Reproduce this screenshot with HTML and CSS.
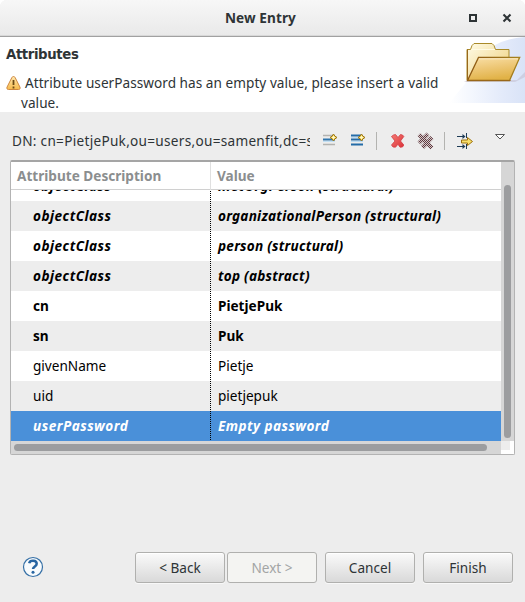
FILE: index.html
```html
<!DOCTYPE html>
<html lang="en">
<head>
<meta charset="utf-8">
<title>New Entry</title>
<link rel="stylesheet" href="styles.css">
</head>
<body>
<div class="dialog">
  <header class="titlebar">
    <h1>New Entry</h1>
    <svg class="winicons" width="48" height="16" viewBox="0 0 48 16"><path d="M5 5h6v6H5z" fill="none" stroke="#2e3436" stroke-width="2"/><path d="M38.500 4.500l7 7M45.500 4.500l-7 7" stroke="#2e3436" stroke-width="2.100"/></svg>
  </header>
  <section class="banner">
    <div class="message">
      <h2>Attributes</h2>
      <div class="warning">
        <svg width="15" height="16" viewBox="0 0 15 16"><defs><linearGradient id="w" x2="0" y2="1"><stop stop-color="#ffe9b0"/><stop offset="1" stop-color="#f6ba4b"/></linearGradient></defs><path d="M7.500 1.500c.8 0 1.300.4 1.700 1.200l4.700 9.300c.7 1.500 0 2.500-1.400 2.500h-10C1.100 14.500.4 13.500 1.100 12l4.700-9.300c.4-.8.9-1.200 1.700-1.200z" fill="url(#w)" stroke="#cd8740"/><path d="M7.500 5v5M7.500 11.500v2" stroke="#6d4b16" stroke-width="1.800"/></svg>
        <p>Attribute userPassword has an empty value, please insert a valid<br><span class="hang">value.</span></p>
      </div>
    </div>
    <svg class="folder" width="75" height="66" viewBox="0 0 75 66">
      <defs>
        <linearGradient id="bg"><stop stop-color="#fff"/><stop offset=".25" stop-color="#f5f8fe"/><stop offset=".7" stop-color="#e3eafa"/><stop offset="1" stop-color="#d9e3f7"/></linearGradient>
        <linearGradient id="back" x2="1" y2="1"><stop stop-color="#fffce8"/><stop offset="1" stop-color="#edcd75"/></linearGradient>
        <linearGradient id="front" x2=".3" y2="1"><stop stop-color="#fae1aa"/><stop offset=".5" stop-color="#eec878"/><stop offset="1" stop-color="#e1b247"/></linearGradient>
        <linearGradient id="edge" x2="1"><stop stop-color="#8d5713"/><stop offset="1" stop-color="#a7831f"/></linearGradient>
      </defs>
      <path d="M0 66V65L14 48 45 8Q58 1 75 0v66z" fill="url(#bg)"/>
      <path d="M17 43h50l8-8v5l-10 5H14z" fill="#bdb5c7" opacity=".45"/>
      <path d="M17 43V12.500h3.500l1.500-4 2-2h18l2 2 1.500 4H59V43z" fill="url(#back)" stroke="#a98a29"/>
      <path d="M21 12.500h24" stroke="#fffbe5"/>
      <path d="M17.500 43.500L28.500 20.500H69.700L59.500 43.500z" fill="url(#front)" stroke="url(#edge)" stroke-width="1.300"/>
      <path d="M28.900 21.800H68" stroke="#fff0cc"/>
      <path d="M17.500 12.500v31h43" fill="none" stroke="#996719"/>
    </svg>
  </section>
  <div class="toolbar">
    <div class="dn">DN: cn=PietjePuk,ou=users,ou=samenfit,dc=samenfit</div>
    <svg class="tools" width="190" height="28" viewBox="320 127 190 28">
      <defs>
        <g id="plus"><path d="M10.500 0l1.400 2.100L14 3.500l-2.100 1.400L10.500 7 9.100 4.900 7 3.500l2.100-1.400z" fill="#f1d468" stroke="#9b7512"/><path d="M10.500 2v3M9 3.500h3" stroke="#fff8c4"/></g>
        <linearGradient id="red" x2="1" y2="1"><stop stop-color="#f47b73"/><stop offset="1" stop-color="#db3239"/></linearGradient>
        <pattern id="check" width="2" height="2" patternUnits="userSpaceOnUse"><path d="M0 0h1v1H0zM1 1h1v1H1z" fill="#5f3a3f"/><path d="M1 0h1v1H1zM0 1h1v1H0z" fill="#d5c8c9"/></pattern>
      </defs>
      <g><path d="M323 135.500h10M323 144.500h12" stroke="#b3b3b0" stroke-width="1.500"/><path d="M323 139.500h12" stroke="#2e75ad" stroke-width="2"/><path d="M323 141.500h12" stroke="#c2e0f4"/><use href="#plus" x="323" y="134"/></g>
      <g><path d="M351 135.500h10M351 139.500h12M351 144.500h12" stroke="#246ca8" stroke-width="2"/><path d="M351 137.500h8M351 141.500h12" stroke="#bcdcf2"/><use href="#plus" x="351" y="134"/></g>
      <path d="M376.500 132v18M444.500 132v18" stroke="#b3b3b0"/>
      <path d="M393.500 135l2-.5 2.500 3 2.500-3 2 .5 1.300 1.500-3.300 4.500 3.300 4-1.300 2-2.500.2-2-3-2.500 3-2.500-.2-1.500-2 3.500-4-3.500-4.500z" fill="url(#red)" stroke="#d33b42" stroke-width=".8"/>
      <g stroke="url(#check)" stroke-width="4"><path d="M419 134.500l8.500 8.500M428 134l-9 9"/><path d="M422 138l10 10M432 137.500l-9.500 10"/></g>
      <g fill="none"><path d="M457 136.500h7M457 146.500h7M466.500 133v5M466.500 144v5" stroke="#1d3b56"/><path d="M462.500 134l3 2.500-3 2.500zM462.500 144l3 2.500-3 2.500z" fill="#1d3b56"/><path d="M461.500 140h6v-2.500l5 4-5 4V143h-6z" fill="#f7df6a" stroke="#9d710f"/></g>
      <path d="M495.500 134.500h9l-4.500 4.500z" fill="#fff" stroke="#555"/>
    </svg>
  </div>
  <div class="table">
    <div class="cols head"><b>Attribute Description</b><b>Value</b></div>
    <div class="corner-top"></div>
    <div class="rows">
      <div class="cols row em first"><span class="c">objectClass</span><span class="c">inetOrgPerson (structural)</span></div>
      <div class="cols row em alt"><span class="c">objectClass</span><span class="c">organizationalPerson (structural)</span></div>
      <div class="cols row em"><span class="c">objectClass</span><span class="c">person (structural)</span></div>
      <div class="cols row em alt"><span class="c">objectClass</span><span class="c">top (abstract)</span></div>
      <div class="cols row strong"><span class="c">cn</span><span class="c">PietjePuk</span></div>
      <div class="cols row strong alt"><span class="c">sn</span><span class="c">Puk</span></div>
      <div class="cols row"><span class="c">givenName</span><span class="c">Pietje</span></div>
      <div class="cols row alt"><span class="c">uid</span><span class="c">pietjepuk</span></div>
      <div class="cols row em selected"><span class="c">userPassword</span><span class="c">Empty password</span></div>
    </div>
    <div class="vbar"><i></i></div>
    <div class="hbar"><i></i></div>
    <div class="corner"></div>
  </div>
  <footer>
    <svg class="help" width="22" height="22" viewBox="0 0 22 22"><circle cx="11" cy="11" r="9.500" fill="#f8fbfd" stroke="#3670a6" stroke-width="1.200"/><path d="M7.200 7.200C8 3.800 14.700 3.900 14.700 7.700c0 2.600-3.700 2.800-3.700 5.300" fill="none" stroke="#2865a2" stroke-width="2.500"/><circle cx="11" cy="16.300" r="1.500" fill="#2865a2"/></svg>
    <button>&lt; Back</button>
    <button disabled>Next &gt;</button>
    <button class="gap">Cancel</button>
    <button class="gap">Finish</button>
  </footer>
</div>
</body>
</html>
```
FILE: styles.css
```css
* { box-sizing: border-box; }
body { margin: 0; background: #fff; font: 13.6px/20px "Noto Sans", sans-serif; color: #2e3436; }
.dialog { width: 525px; height: 602px; background: #ededed; border-radius: 7px 7px 0 0; overflow: hidden; display: flex; flex-direction: column; }
h1, h2, p { margin: 0; font-size: inherit; }
.titlebar { height: 37px; flex: none; display: grid; grid-template-columns: 465px 48px; align-items: center; background: linear-gradient(#f7f7f7, #e9e9e9); border-bottom: 1px solid #a1a1a1; box-shadow: inset 0 -1px #d8d8d8; }
.titlebar h1 { padding-left: 225px; letter-spacing: .07px; }
.winicons { display: block; }
.banner { height: 75px; flex: none; background: #fff; display: flex; justify-content: space-between; }
.message { padding: 8px 0 0 6px; white-space: nowrap; }
h2 { font-family: "DejaVu Sans", sans-serif; font-size: 13.3px; line-height: 20px; letter-spacing: -.4px; }
.warning { display: flex; margin-top: 8px; }
.warning svg { margin-top: 2px; }
.warning p { padding-left: 4px; letter-spacing: .04px; }
.hang { margin-left: -4px; }
.folder { display: block; }
.toolbar { height: 49px; flex: none; display: flex; padding: 15px 0 0 12px; }
.dn { width: 298px; height: 28px; padding-top: 4px; overflow: hidden; white-space: nowrap; margin-right: 10px; letter-spacing: .29px; }
.tools { display: block; }
.table { margin: -1px 0 0 10px; width: 505px; height: 295px; flex: none; background: #fff; border: 1px solid #b3b3b3; border-top: 2px solid #a5a5a5; border-radius: 2px; display: grid; grid-template-columns: 490px 13px; grid-template-rows: 28px 251px 13px; color: #000; white-space: nowrap; }
.cols { display: grid; grid-template-columns: 199px 1fr; }
.head { border-bottom: 1px solid #d0d0d0; color: #8b8e8f; line-height: 28px; padding-left: 6px; grid-template-columns: 193px 1fr; }
.head b + b { padding-left: 6px; border-left: 1px solid #e0e0e0; }
.corner-top { background: #d6d6d6; }
.rows { overflow: hidden; }
.row { height: 30px; line-height: 30px; }
.first { margin-top: -19px; }
.c { padding-left: 22px; }
.c + .c { padding-left: 7px; border-left: 1px solid transparent; background: repeating-linear-gradient(#000 0 1px, transparent 1px 2px) 0 0/1px 100% no-repeat border-box; }
.em { font-weight: bold; font-style: italic; letter-spacing: .48px; }
.em .c + .c { letter-spacing: .24px; }
.em.selected .c + .c { letter-spacing: .43px; }
.strong { font-weight: bold; }
.alt { background: #ededed; }
.selected { background: #4a90d9; color: #fff; }
.vbar { background: #d6d6d6; padding: 0 3px 3px; display: flex; margin-top: -5px; }
.vbar i { flex: 1; background: #9c9d9f; border-radius: 4px; }
.hbar { background: #d6d6d6; padding: 3px 14px 3px 3px; display: flex; }
.hbar i { flex: 1; background: #9c9d9f; border-radius: 4px; }
.corner { background: #ededed; border: solid #fff; border-width: 0 4px 4px 0; }
footer { display: flex; padding: 97px 0 0 22px; }
.help { margin: 4px 91px 0 0; }
button { width: 90px; height: 31px; flex: none; margin: 0 2px 0 0; padding: 0; font: inherit; color: #2e3436; border: 1px solid #b0b0ae; border-radius: 3px; background: linear-gradient(#fafafa, #d9d9d9); box-shadow: inset 0 1px #fff, 0 1px #f8f8f8; }
button:disabled { background: #f4f4f2; color: #a3a5a5; box-shadow: none; }
.gap { margin-left: 6px; }
```
